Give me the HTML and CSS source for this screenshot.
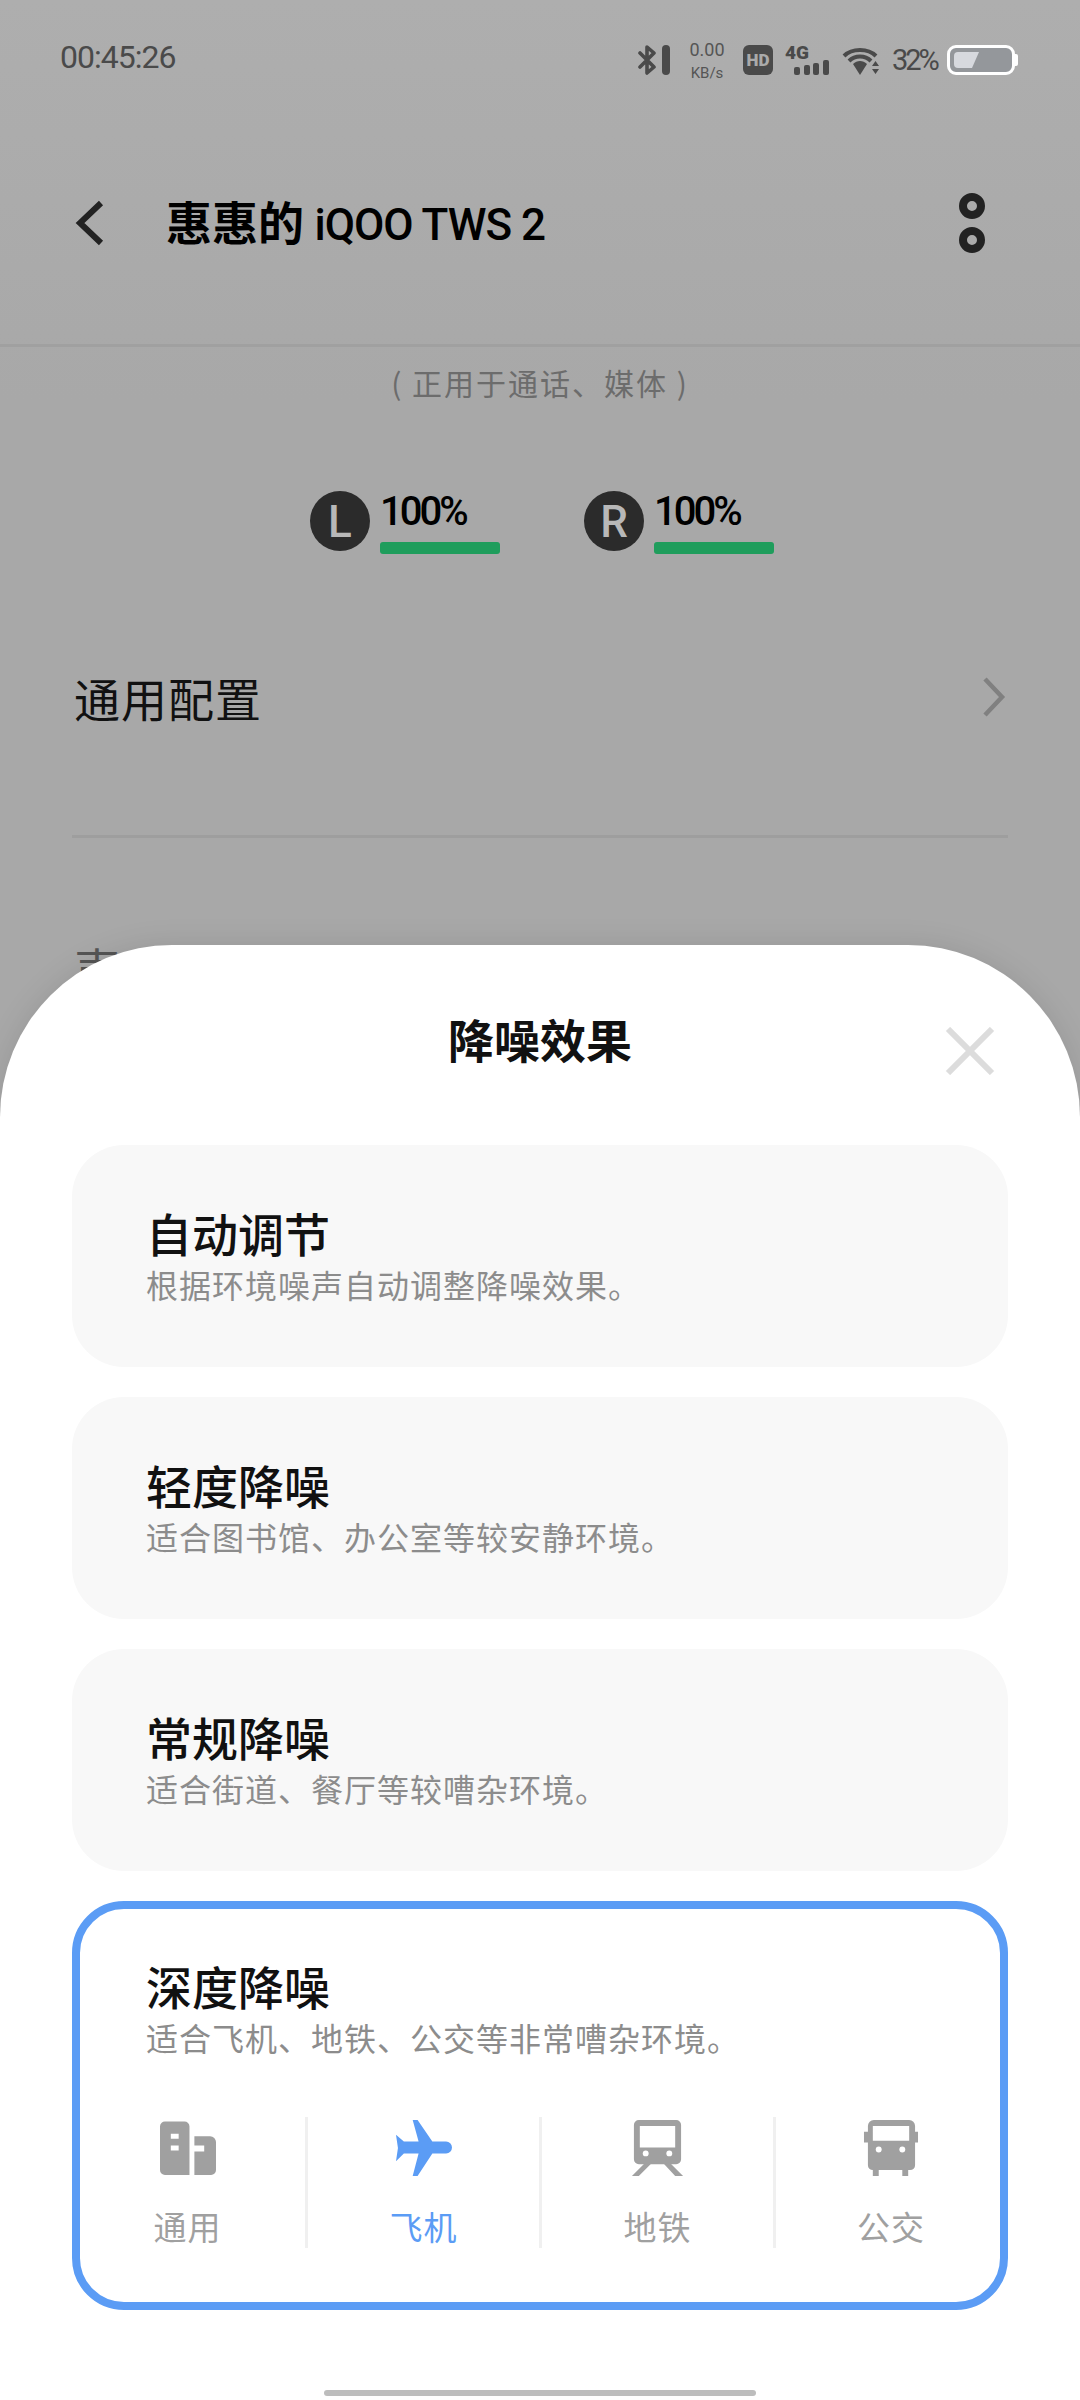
FILE: index.html
```html
<!DOCTYPE html>
<html lang="zh-CN">
<head>
  <meta charset="UTF-8">
  <title>降噪效果</title>
  <link rel="stylesheet" href="styles.css">
</head>
<body>

  <div class="page">
    <div class="status-bar">
      <span class="clock">00:45:26</span>
      <div class="status-icons">
        <svg class="ic-bt" width="32" height="30" viewBox="0 0 32 30"><path d="M2 8 L16 22 L9 28 V2 L16 8 L2 22" fill="none" stroke="#4a4a4a" stroke-width="3.6" stroke-linecap="round" stroke-linejoin="round"/><rect x="24" y="0" width="8" height="30" rx="4" fill="#4a4a4a"/></svg>
        <div class="net-speed"><span>0.00</span><span class="unit">KB/s</span></div>
        <div class="hd">HD</div>
        <div class="signal">
          <span class="four-g">4G</span>
          <svg width="35" height="15" viewBox="0 0 35 15" class="bars"><rect x="0" y="7" width="6" height="8" rx="2" fill="#4a4a4a"/><rect x="10" y="5" width="6" height="10" rx="2" fill="#4a4a4a"/><rect x="19" y="3" width="6" height="12" rx="2" fill="#4a4a4a"/><rect x="29" y="0" width="6" height="15" rx="2" fill="#4a4a4a"/></svg>
        </div>
        <svg class="ic-wifi" width="37" height="28" viewBox="0 0 37 28"><g fill="none" stroke="#4a4a4a" stroke-width="4"><path d="M2 9 C10 1 26 1 34 9"/><path d="M7 14 C13 8 23 8 29 14"/></g><path d="M11 17 C15 13 21 13 25 17 L18 28 Z" fill="#4a4a4a"/><path d="M33.500 14 L37 19 H30 Z M30 22 H37 L33.500 27 Z" fill="#4a4a4a"/></svg>
        <span class="batt-text">32%</span>
        <div class="battery"><div class="battery-fill"></div></div>
      </div>
    </div>

    <div class="top-bar">
      <svg class="back" width="30" height="46" viewBox="0 0 30 46"><path d="M26 3 L5 23 L26 43" fill="none" stroke="#222" stroke-width="6"/></svg>
      <h1 class="device-name">惠惠的 <span class="latin">iQOO TWS 2</span></h1>
      <div class="more"><i></i><i></i></div>
    </div>

    <p class="usage">( 正用于通话、媒体 )</p>

    <div class="earbuds">
      <div class="bud">
        <div class="bud-letter">L</div>
        <div class="bud-info"><span class="bud-level">100%</span><div class="bud-bar"></div></div>
      </div>
      <div class="bud">
        <div class="bud-letter">R</div>
        <div class="bud-info"><span class="bud-level">100%</span><div class="bud-bar"></div></div>
      </div>
    </div>

    <div class="setting-row">
      <span>通用配置</span>
      <svg width="24" height="40" viewBox="0 0 24 40"><path d="M3 2 L20 20 L3 38" fill="none" stroke="#808080" stroke-width="4.5"/></svg>
    </div>
    <div class="divider"></div>
    <div class="setting-row next-row"><span>声音效果</span></div>
  </div>

  <div class="sheet">
    <div class="sheet-head">
      <h2>降噪效果</h2>
      <svg class="close" width="50" height="48" viewBox="0 0 50 48"><path d="M3 2 L47 46 M47 2 L3 46" fill="none" stroke="#dcdcdc" stroke-width="6"/></svg>
    </div>

    <div class="option">
      <div class="option-title">自动调节</div>
      <div class="option-desc">根据环境噪声自动调整降噪效果。</div>
    </div>
    <div class="option">
      <div class="option-title">轻度降噪</div>
      <div class="option-desc">适合图书馆、办公室等较安静环境。</div>
    </div>
    <div class="option">
      <div class="option-title">常规降噪</div>
      <div class="option-desc">适合街道、餐厅等较嘈杂环境。</div>
    </div>
    <div class="option selected">
      <div class="option-title">深度降噪</div>
      <div class="option-desc">适合飞机、地铁、公交等非常嘈杂环境。</div>
      <div class="modes">
        <div class="mode">
          <svg width="60" height="60" viewBox="0 0 57 57"><path d="M5 1.500 H25 A5 5 0 0 1 30 6.500 V56 H5 A5 5 0 0 1 0 51 V6.500 A5 5 0 0 1 5 1.500 Z M11 14 V19 H19 V14 Z M11 26 V31 H19 V26 Z" fill="#a0a0a0" fill-rule="evenodd"/><path d="M35 16.500 H51 A6 6 0 0 1 57 22.500 V51 A5 5 0 0 1 52 56 H35 V32 H45 V26 H35 Z" fill="#a0a0a0"/></svg>
          <span>通用</span>
        </div>
        <div class="mode active">
          <svg width="61" height="60" viewBox="0 0 58 57"><path d="M18 0 H23 L38 22 H52 A6 6 0 0 1 52 34 H38 L23 57 H18 L24 34 H9 L1 42 L3 28.500 L1 15 L9 22 H24 Z" fill="#5b9cf5"/></svg>
          <span>飞机</span>
        </div>
        <div class="mode">
          <svg width="55" height="60" viewBox="0 0 52 57"><path d="M7 0 H45 A5 5 0 0 1 50 5 V40 A5 5 0 0 1 45 45 H7 A5 5 0 0 1 2 40 V5 A5 5 0 0 1 7 0 Z M8 6 V28 H44 V6 Z" fill="#a0a0a0" fill-rule="evenodd"/><circle cx="14" cy="34" r="3" fill="#fff"/><circle cx="38" cy="34" r="3" fill="#fff"/><path d="M14 43 H21 L7 57 H0 Z M38 43 H31 L44 57 H52 Z" fill="#a0a0a0"/></svg>
          <span>地铁</span>
        </div>
        <div class="mode">
          <svg width="58" height="60" viewBox="0 0 55 57"><path d="M10 0 H46 A6 6 0 0 1 52 6 V12 H55 V23 H52 V46 A5 5 0 0 1 47 51 H45 V57 H39 V51 H15 V57 H9 V51 H9 A5 5 0 0 1 4 46 V23 H0 V12 H4 V6 A6 6 0 0 1 10 0 Z M9 6 V21 H46 V6 Z" fill="#a0a0a0" fill-rule="evenodd"/><circle cx="15" cy="30" r="3" fill="#fff"/><circle cx="39" cy="30" r="3" fill="#fff"/></svg>
          <span>公交</span>
        </div>
      </div>
    </div>

    <div class="home-bar"></div>
  </div>

</body>
</html>
```

FILE: styles.css
```css
* {
  box-sizing: border-box;
}

html, body {
  margin: 0;
  padding: 0;
}

body {
  width: 1080px;
  height: 2400px;
  position: relative;
  overflow: hidden;
  font-family: "Noto Sans CJK SC", "Noto Sans", sans-serif;
  background: linear-gradient(#aeaeae, #a8a8a8 400px, #a8a8a8);
  color: #111;
}

.page {
  padding: 0 72px;
}

/* status bar */
.status-bar {
  height: 120px;
  margin: 0 -10px 0 -12px;
  padding-top: 41px;
  display: flex;
  justify-content: space-between;
  align-items: flex-start;
  color: #4a4a4a;
  font-family: Roboto, sans-serif;
}

.clock {
  font-size: 32px;
  line-height: 32px;
  letter-spacing: -1px;
}

.status-icons {
  display: flex;
  align-items: flex-start;
  padding-top: 4px;
}

.ic-bt {
  margin-right: 20px;
}

.net-speed {
  width: 34px;
  display: flex;
  flex-direction: column;
  align-items: center;
  font-size: 18px;
  line-height: 18px;
  margin-top: -4px;
  margin-right: 19px;
  color: #555;
}

.net-speed .unit {
  font-size: 15px;
  margin-top: 5px;
  white-space: nowrap;
}

.hd {
  width: 30px;
  height: 30px;
  border-radius: 6px;
  background: #4a4a4a;
  color: #aaa;
  font-size: 17px;
  font-weight: 900;
  line-height: 30px;
  text-align: center;
  margin-right: 12px;
}

.signal {
  position: relative;
  width: 44px;
  height: 30px;
  margin-right: 13px;
}

.four-g {
  position: absolute;
  left: 0;
  top: -2px;
  font-size: 19px;
  line-height: 19px;
  font-weight: 900;
}

.bars {
  position: absolute;
  left: 9px;
  bottom: 0;
}

.ic-wifi {
  margin-top: 2px;
  margin-right: 13px;
}

.batt-text {
  width: 55px;
  font-size: 29px;
  line-height: 30px;
  letter-spacing: -3px;
  white-space: nowrap;
}

.battery {
  position: relative;
  width: 68px;
  height: 30px;
  margin-right: 3px;
  padding: 4px;
  background: #94979b;
  border: 3px solid #fff;
  border-radius: 9px;
}

.battery::after {
  content: "";
  position: absolute;
  right: -6px;
  top: 6px;
  width: 3px;
  height: 12px;
  background: #fff;
  border-radius: 0 2px 2px 0;
}

.battery-fill {
  width: 25px;
  height: 100%;
  background: #d7d9de;
  border-radius: 4px 0 0 4px;
  clip-path: polygon(0 0, 100% 0, 72% 100%, 0 100%);
}

/* top bar */
.top-bar {
  height: 227px;
  padding-bottom: 19px;
  margin: 0 -72px;
  padding-left: 75px;
  padding-right: 95px;
  display: flex;
  align-items: center;
  border-bottom: 3px solid #a0a0a0;
}

.back {
  margin-right: 61px;
}

.device-name {
  flex: 1;
  margin: 0;
  font-size: 46px;
  font-weight: 700;
  line-height: 56px;
  color: #000;
  white-space: nowrap;
}

.latin {
  font-family: Roboto, sans-serif;
  font-size: 44px;
  font-weight: 500;
  letter-spacing: -1px;
}

.more {
  display: flex;
  flex-direction: column;
  gap: 8px;
}

.more i {
  display: block;
  width: 26px;
  height: 26px;
  border: 8px solid #222;
  border-radius: 50%;
}

.usage {
  margin: 0;
  padding-top: 13px;
  text-align: center;
  font-size: 30px;
  line-height: 44px;
  letter-spacing: 2px;
  color: #6c6c6c;
}

/* earbud battery */
.earbuds {
  display: flex;
  justify-content: center;
  gap: 84px;
  padding-top: 87px;
  margin-left: 4px;
}

.bud {
  display: flex;
  align-items: flex-start;
  gap: 10px;
}

.bud-letter {
  width: 60px;
  height: 60px;
  border-radius: 50%;
  background: #2b2b2b;
  color: #b8b8b8;
  font-family: Roboto, sans-serif;
  font-size: 44px;
  font-weight: 500;
  line-height: 62px;
  text-align: center;
}

.bud-info {
  width: 120px;
  display: flex;
  flex-direction: column;
}

.bud-level {
  font-family: Roboto, sans-serif;
  font-size: 40px;
  font-weight: 500;
  line-height: 44px;
  letter-spacing: -3px;
  color: #000;
  margin-top: -1px;
}

.bud-bar {
  height: 12px;
  margin-top: 8px;
  border-radius: 3px;
  background: #1f9d5c;
}

/* settings list */
.setting-row {
  display: flex;
  justify-content: space-between;
  align-items: center;
  padding: 113px 2px 0;
  font-size: 46px;
  line-height: 60px;
  letter-spacing: 1px;
}

.divider {
  height: 3px;
  margin-top: 108px;
  background: #9e9e9e;
}

.setting-row.next-row {
  padding-top: 99px;
  color: #555;
}

/* bottom sheet */
.sheet {
  position: absolute;
  left: 0;
  right: 0;
  top: 945px;
  bottom: 0;
  padding: 0 72px;
  background: #fff;
  border-radius: 172px 172px 0 0;
  box-shadow: 0 0 30px rgba(0, 0, 0, .1);
}

.sheet-head {
  height: 200px;
  position: relative;
  text-align: center;
}

.sheet-head h2 {
  margin: 0;
  padding-top: 63px;
  font-size: 46px;
  font-weight: 700;
  line-height: 60px;
  color: #111;
}

.close {
  position: absolute;
  right: 13px;
  top: 82px;
}

.option {
  height: 222px;
  margin-bottom: 30px;
  padding: 58px 74px 0;
  background: #f8f8f8;
  border-radius: 52px;
}

.option-title {
  font-size: 46px;
  font-weight: 500;
  line-height: 59px;
  color: #111;
}

.option-desc {
  font-size: 32px;
  line-height: 44px;
  letter-spacing: 1px;
  color: #8c8c8c;
}

.selected {
  height: 409px;
  margin-bottom: 0;
  padding: 47px 66px 0;
  background: #fff;
  border: 8px solid #5b9cf5;
}

.modes {
  display: grid;
  grid-template-columns: 238px 234px 234px 1fr;
  margin: 58px -72px 0 -76px;
}

.mode {
  height: 131px;
  padding-top: 3px;
  display: flex;
  flex-direction: column;
  align-items: center;
  gap: 28px;
  border-right: 3px solid #f0f0f0;
  font-size: 33px;
  line-height: 44px;
  letter-spacing: 1px;
  color: #a0a0a0;
}

.mode:last-child {
  border-right: none;
}

.mode.active {
  color: #5b9cf5;
}

.home-bar {
  width: 432px;
  height: 6px;
  margin: 80px auto 0;
  border-radius: 3px;
  background: #bdbdbd;
}
```
